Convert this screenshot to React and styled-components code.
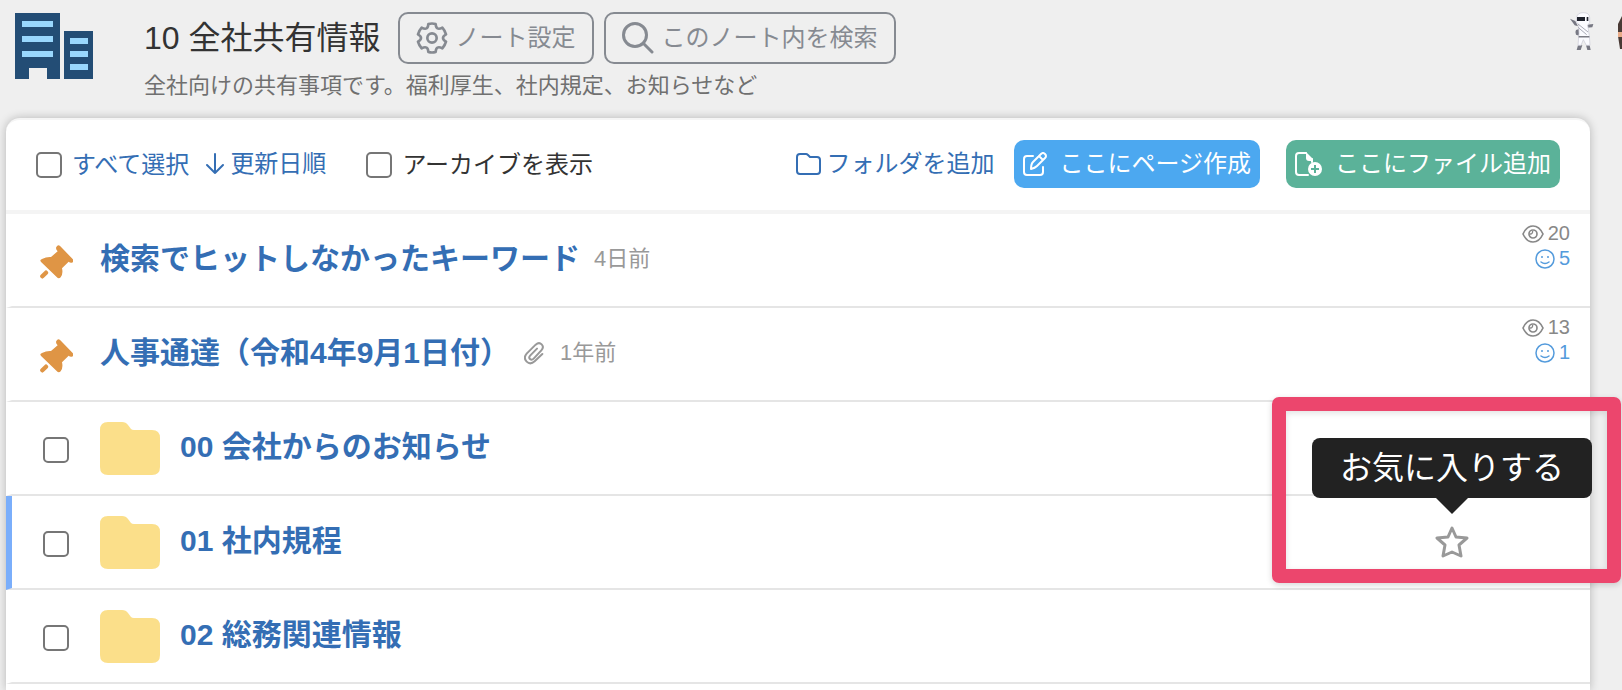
import { useState } from "react"
import styled, { createGlobalStyle } from "styled-components";

const GlobalStyle = createGlobalStyle`
* {
  box-sizing: border-box;
}
body {
  margin: 0;
  background: #efefef;
  color: #333333;
  font-family: "Liberation Sans", "Noto Sans CJK JP", sans-serif;
  font-size: 24px;
  line-height: 32px;
  overflow: hidden;
}
#root {
  display: flex;
  flex-direction: column;
  min-height: 100vh;
}
button {
  font: inherit;
  cursor: pointer;
}
svg {
  display: block;
  flex: none;
}
`;

const Header = styled.header`
display: flex;
align-items: flex-start;
height: 118px;
padding: 12px 0 0 14px;
`;
const Heading = styled.div`
flex: 1;
margin-left: 50px;
`;
const TitleLine = styled.div`
display: flex;
align-items: center;
gap: 10px;
`;
const Title = styled.h1`
margin: 0 7px 0 0;
font-size: 32px;
font-weight: normal;
line-height: 40px;
`;
const OutlineButton = styled.button`
display: flex;
align-items: center;
gap: 8px;
height: 52px;
padding: 0 16px;
color: #868a91;
background: transparent;
border: 2px solid #868a91;
border-radius: 10px;
`;
const Description = styled.p`
margin: 6px 0 0;
color: #707070;
font-size: 22px;
`;
const Members = styled.div`
display: flex;
gap: 24px;
width: 52px;
overflow: hidden;
`;

const Panel = styled.main`
flex: 1;
margin: 0 32px 0 6px;
background: white;
border-top: 2px solid #f5f5f5;
border-radius: 14px 14px 0 0;
box-shadow: 0 0 10px rgba(0, 0, 0, 0.24);
`;
const Toolbar = styled.div`
display: flex;
align-items: center;
height: 94px;
padding: 0 30px;
border-bottom: 4px solid #f4f4f4;
`;
const CheckLabel = styled.label`
display: flex;
align-items: center;
gap: 10px;
color: ${(props) => (props.$link ? "#346eb4" : "#333333")};
`;
const Checkbox = styled.input.attrs({ type: "checkbox" })`
appearance: none;
flex: none;
width: 26px;
height: 26px;
margin: 0;
background: white;
border: 2px solid #767676;
border-radius: 5px;
&:checked{
   background: #346eb4;
}
`;
const TextButton = styled.button`
display: flex;
align-items: center;
gap: 5px;
padding: 0;
color: #346eb4;
background: none;
border: none;
`;
const SortButton = styled(TextButton)`
margin: 0 40px 0 16px;
padding-bottom: 2px;
`;
const Tools = styled.div`
display: flex;
align-items: center;
gap: 20px;
margin-left: auto;
padding-bottom: 2px;
`;
const FilledButton = styled.button`
display: flex;
align-items: center;
gap: 12px;
height: 48px;
padding: 0 9px;
color: white;
background: ${(props) => props.$color};
border: none;
border-radius: 10px;
`;
const MainActions = styled.div`
display: flex;
gap: 26px;
`;

const List = styled.ul`
list-style: none;
margin: 0;
padding: 0;
`;
const Row = styled.li`
position: relative;
display: flex;
align-items: center;
height: 94px;
padding-right: 20px;
border-bottom: 2px solid #e5e5e5;
border-left: 6px solid ${(props) => (props.$active ? "#7aaefb" : "transparent")};
`;
const Lead = styled.div`
display: flex;
justify-content: center;
width: 88px;
padding-top: 4px;
`;
const RowTitle = styled.a`
padding-bottom: 2px;
color: #346eb4;
font-size: 30px;
font-weight: bold;
line-height: 40px;
text-decoration: none;
${(props) => props.$folder && "margin-left: 20px;"}
`;
const Meta = styled.span`
display: flex;
align-items: center;
gap: 16px;
margin-left: 14px;
padding-bottom: 2px;
color: #999999;
font-size: 22px;
`;
const Stats = styled.div`
align-self: flex-start;
margin-left: auto;
padding-top: 7px;
`;
const Stat = styled.div`
display: flex;
align-items: center;
justify-content: flex-end;
gap: 4px;
color: ${(props) => props.$color};
font-size: 20px;
line-height: 25px;
`;
const Favorite = styled.button`
position: relative;
margin: 0 101px 0 auto;
padding: 0;
background: none;
border: none;
`;
const Tooltip = styled.span`
position: absolute;
bottom: calc(100% + 27px);
left: 50%;
transform: translateX(-50%);
padding: 10px 28px;
color: white;
background: #222222;
border-radius: 8px;
font-size: 32px;
line-height: 40px;
white-space: nowrap;
&::after{
   content: "";
   position: absolute;
   top: 100%;
   left: 50%;
   transform: translateX(-50%);
   border: 16px solid transparent;
   border-top-color: #222222;
   border-bottom: none;
}
`;
const Highlight = styled.div`
position: absolute;
top: -99px;
right: -31px;
width: 349px;
height: 186px;
border: 14px solid #ec466d;
border-radius: 7px;
box-shadow: 0 2px 6px rgba(0, 0, 0, 0.16), inset 0 2px 6px rgba(0, 0, 0, 0.12);
pointer-events: none;
`;

function Building() {
    return <svg width="80" height="68" viewBox="0 0 80 68" aria-hidden="true">
        <path fill="#234d75" d="M1 1h45v66H33V56H15v11H1zM50 19h29v48H50z" />
        <path fill="#99d7fd" d="M8 9h31v6H8zM8 24h31v6H8zM8 39h31v6H8zM56 26h18v6H56zM56 39h18v6H56zM56 52h18v6H56z" />
    </svg>
}

function Gear() {
    return <svg width="32" height="32" viewBox="0 0 96 96" fill="none" stroke="currentColor" strokeWidth="8" strokeLinejoin="round" aria-hidden="true">
        <path d="M37 6Q48 3 59 6Q60 27 79 17Q87 26 90 37Q72 48 90 59Q87 70 79 79Q60 69 59 90Q48 93 37 90Q36 69 17 79Q9 70 6 59Q24 48 6 37Q9 26 17 17Q36 27 37 6z" />
        <circle cx="48" cy="48" r="14" />
    </svg>
}

function Magnifier() {
    return <svg width="32" height="32" viewBox="0 0 32 32" fill="none" stroke="currentColor" strokeWidth="3" strokeLinecap="round" aria-hidden="true">
        <circle cx="13" cy="13" r="11.5" />
        <path d="M22 22l8 8" />
    </svg>
}

function NinjaAvatar() {
    return <svg width="24" height="40" viewBox="0 0 72 120" aria-hidden="true">
        <path fill="#777883" d="M0 20l16 7 8 16-10-3zM50 38l20-2-3 10-17 1zM18 54l12-4v22l-12-4q-4-7 0-14zM24 100h13l-5 14H20zM48 100h11l3 14H52z" />
        <path fill="#fbfbff" stroke="#c9c9d4" strokeWidth="2" d="M20 16Q22 2 40 2t19 14v16l-6 7 5 32 2 29H49l-9-17-7 17H24l3-36-1-26-7-8z" />
        <path fill="#20232d" d="M21 15h24v12H21zM50 15h5v12h-5z" />
        <path fill="#3c3d48" d="M26 73h32v3H26z" />
        <path stroke="#a9aab6" strokeWidth="3" fill="none" d="M24 36l30 24M24 46l26 22" />
    </svg>
}

function SideAvatar() {
    return <svg width="24" height="40" viewBox="0 0 24 40" aria-hidden="true">
        <path fill="#493a35" d="M4 4h16v33H2L0 24V12z" />
        <path fill="#e9ab88" d="M0 20h20v5H0z" />
    </svg>
}

function ArrowDown() {
    return <svg width="20" height="24" viewBox="0 0 20 24" fill="none" stroke="currentColor" strokeWidth="2" strokeLinecap="round" strokeLinejoin="round" aria-hidden="true">
        <path d="M10 2v19M2 13l8 8 8-8" />
    </svg>
}

function FolderOutline() {
    return <svg width="25" height="24" viewBox="0 0 25 24" fill="none" stroke="currentColor" strokeWidth="2" aria-hidden="true">
        <path d="M1 5q0-3 3-3h6q1 0 2 1l2 2h7q3 0 3 3v11q0 3-3 3H4q-3 0-3-3z" />
    </svg>
}

function PencilSquare() {
    return <svg width="24" height="24" viewBox="0 0 24 24" fill="none" stroke="currentColor" strokeWidth="2" strokeLinecap="round" strokeLinejoin="round" aria-hidden="true">
        <path d="M10 4H4q-3 0-3 3v13q0 3 3 3h13q3 0 3-3v-5" />
        <path d="M8 17q0-5 2-7l8-8q2-2 4 0t0 4l-8 8q-2 2-6 3zM16 4l4 4" />
    </svg>
}

function FilePlus() {
    return <svg width="28" height="24" viewBox="0 0 28 24" fill="none" aria-hidden="true">
        <path stroke="white" strokeWidth="2" strokeLinecap="round" d="M11 1H4Q1 1 1 4v16q0 3 3 3h9M17 7v3" />
        <path fill="white" d="M11 0l7 7v2h-4q-3 0-3-3z" />
        <circle cx="20" cy="17" r="7" fill="white" />
        <path stroke="#5bb299" strokeWidth="2" d="M20 13v8M16 17h8" />
    </svg>
}

function Pin() {
    return <svg width="34" height="34" viewBox="-2 0 102 102" aria-hidden="true">
        <path fill="#df9545" d="M50 6q5-9 12-2l37 38q6 8-3 11-5 1-9-3L67 70q4 16-4 27-6 6-12-1L5 52q-7-7 2-10 13-7 27-6l20-17q-7-7-4-13z" />
        <path stroke="#df9545" strokeWidth="13" strokeLinecap="round" d="M19 83L8 94" />
    </svg>
}

function Paperclip() {
    return <svg width="20" height="24" viewBox="0 0 60 72" fill="none" stroke="currentColor" strokeWidth="6" strokeLinecap="round" aria-hidden="true">
        <path d="M55 39L32 61Q19 73 8 62T8 38L35 11Q45 2 53 10T52 28L29 53Q23 59 18 54T19 43L39 23" />
    </svg>
}

function Eye() {
    return <svg width="22" height="18" viewBox="0 0 66 54" fill="none" stroke="currentColor" strokeWidth="5" aria-hidden="true">
        <path d="M3 27Q14 3 33 3t30 24Q52 51 33 51T3 27z" />
        <circle cx="33" cy="27" r="12" />
        <path strokeWidth="4" d="M24 27q8 1 8-9" />
    </svg>
}

function Smile() {
    return <svg width="20" height="20" viewBox="0 0 20 20" fill="none" stroke="currentColor" strokeWidth="2" strokeLinecap="round" aria-hidden="true">
        <circle cx="10" cy="10" r="9" strokeWidth="1.5" />
        <path strokeWidth="1.5" d="M6 13q4 3 8 0" />
        <path d="M7 8h0M13 8h0" />
    </svg>
}

function Folder() {
    return <svg width="60" height="53" viewBox="0 0 60 53" aria-hidden="true">
        <path fill="#fbdf8a" d="M0 8q0-8 8-8h14q4 0 6 3l3 4q1 1 3 1h18q8 0 8 8v29q0 8-8 8H8q-8 0-8-8z" />
    </svg>
}

function Star() {
    return <svg width="34" height="34" viewBox="0 0 34 34" fill="none" stroke="#999999" strokeWidth="3" strokeLinejoin="round" aria-hidden="true">
        <path d="M17 3l4 9 11 1-8 7 2 11-9-4-9 4 2-11-8-7 11-1z" />
    </svg>
}

const pages = [
    { title: "検索でヒットしなかったキーワード", date: "4日前", views: 20, likes: 5 },
    { title: "人事通達（令和4年9月1日付）", date: "1年前", views: 13, likes: 1, attached: true },
];
const folders = ["00 会社からのお知らせ", "01 社内規程", "02 総務関連情報"];

export default function App(){
    const [selected, setSelected] = useState([])
    const [archive, setArchive] = useState(false)

    const toggle = (name) => {
        setSelected(selected.includes(name) ? selected.filter((n) => n !== name) : [...selected, name]);
    }

    return <>
        <GlobalStyle />
        <Header>
            <Building />
            <Heading>
                <TitleLine>
                    <Title>10 全社共有情報</Title>
                    <OutlineButton type="button"><Gear />ノート設定</OutlineButton>
                    <OutlineButton type="button"><Magnifier />このノート内を検索</OutlineButton>
                </TitleLine>
                <Description>全社向けの共有事項です。福利厚生、社内規定、お知らせなど</Description>
            </Heading>
            <Members>
                <NinjaAvatar />
                <SideAvatar />
            </Members>
        </Header>

        <Panel>
            <Toolbar>
                <CheckLabel $link>
                    <Checkbox
                        checked={selected.length === folders.length}
                        onChange={(e) => setSelected(e.target.checked ? folders : [])}
                    />
                    すべて選択
                </CheckLabel>
                <SortButton type="button"><ArrowDown />更新日順</SortButton>
                <CheckLabel>
                    <Checkbox checked={archive} onChange={(e) => setArchive(e.target.checked)} />
                    アーカイブを表示
                </CheckLabel>
                <Tools>
                    <TextButton type="button"><FolderOutline />フォルダを追加</TextButton>
                    <MainActions>
                        <FilledButton type="button" $color="#4ca8f0"><PencilSquare />ここにページ作成</FilledButton>
                        <FilledButton type="button" $color="#5bb299"><FilePlus />ここにファイル追加</FilledButton>
                    </MainActions>
                </Tools>
            </Toolbar>

            <List>
                {pages.map((page) => (
                    <Row key={page.title}>
                        <Lead><Pin /></Lead>
                        <RowTitle href="#">{page.title}</RowTitle>
                        <Meta>{page.attached && <Paperclip />}{page.date}</Meta>
                        <Stats>
                            <Stat $color="#888888"><Eye />{page.views}</Stat>
                            <Stat $color="#549bdc"><Smile />{page.likes}</Stat>
                        </Stats>
                    </Row>
                ))}
                {folders.map((name, i) => (
                    <Row key={name} $active={i === 1}>
                        <Lead>
                            <Checkbox aria-label={name} checked={selected.includes(name)} onChange={() => toggle(name)} />
                        </Lead>
                        <Folder />
                        <RowTitle href="#" $folder>{name}</RowTitle>
                        {i === 1 && <>
                            <Favorite type="button">
                                <Star />
                                <Tooltip role="tooltip">お気に入りする</Tooltip>
                            </Favorite>
                            <Highlight />
                        </>}
                    </Row>
                ))}
            </List>
        </Panel>
    </>
}
